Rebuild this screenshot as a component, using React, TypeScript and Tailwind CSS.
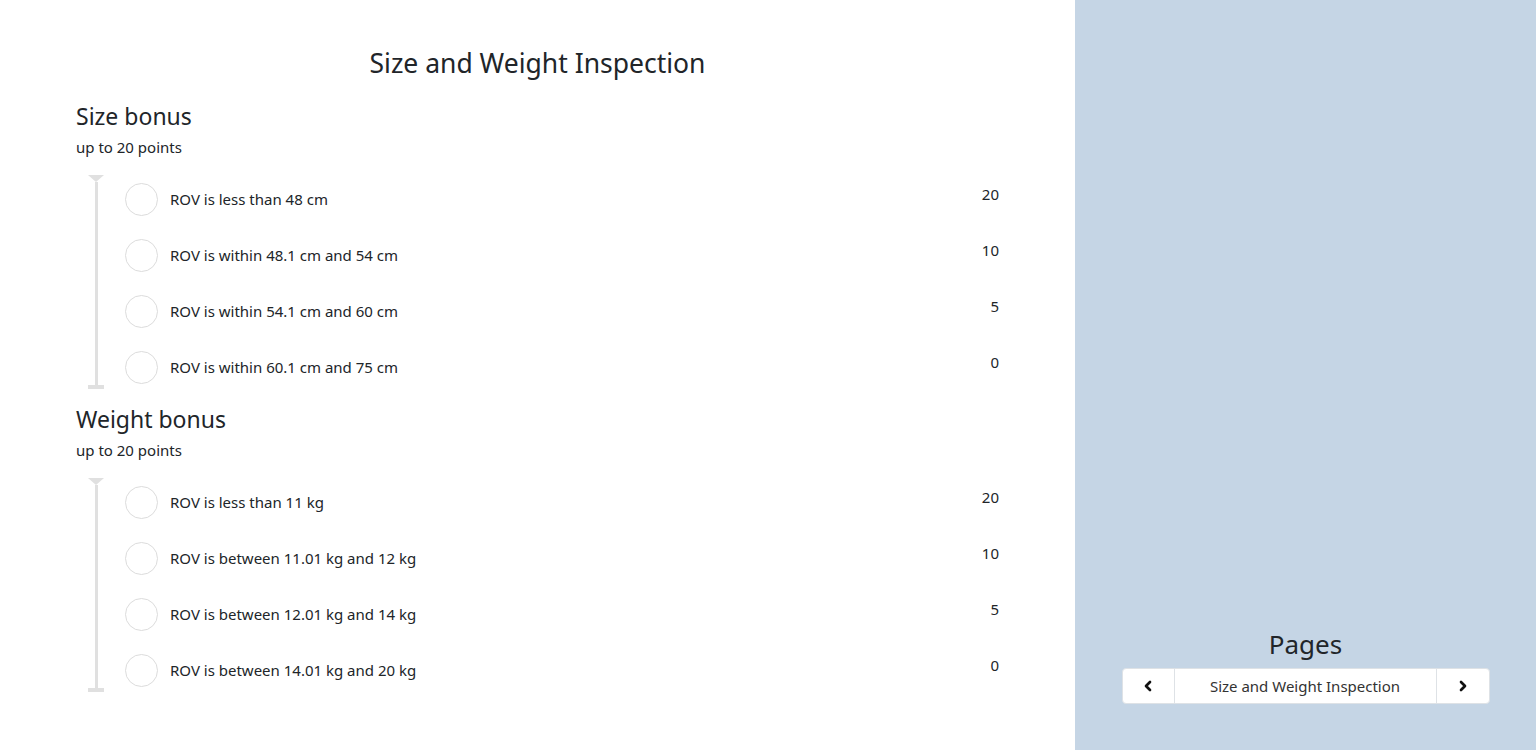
import { ChevronLeft, ChevronRight } from "lucide-react";

type Option = {
  label: string;
  points: number;
};

type Section = {
  title: string;
  subtitle: string;
  options: Option[];
};

const sections: Section[] = [
  {
    title: "Size bonus",
    subtitle: "up to 20 points",
    options: [
      { label: "ROV is less than 48 cm", points: 20 },
      { label: "ROV is within 48.1 cm and 54 cm", points: 10 },
      { label: "ROV is within 54.1 cm and 60 cm", points: 5 },
      { label: "ROV is within 60.1 cm and 75 cm", points: 0 },
    ],
  },
  {
    title: "Weight bonus",
    subtitle: "up to 20 points",
    options: [
      { label: "ROV is less than 11 kg", points: 20 },
      { label: "ROV is between 11.01 kg and 12 kg", points: 10 },
      { label: "ROV is between 12.01 kg and 14 kg", points: 5 },
      { label: "ROV is between 14.01 kg and 20 kg", points: 0 },
    ],
  },
];

const BonusSection = ({ title, subtitle, options }: Section) => {
  return (
    <div className="flex flex-col">
      <h2 className="text-[23px] leading-[29px]">{title}</h2>
      <p className="text-[15px] leading-[20px] mt-[6px]">{subtitle}</p>
      <div className="flex flex-row mt-[18px]">
        {/* timeline rail */}
        <div className="flex flex-col items-center w-[16px] ml-[12px]">
          <div className="w-0 h-0 border-l-[8px] border-r-[8px] border-t-[7px] border-l-transparent border-r-transparent border-t-[#e0e0e0]" />
          <div className="w-[3px] flex-1 bg-[#e0e0e0]" />
          <div className="w-[16px] h-[4px] bg-[#e0e0e0]" />
        </div>
        <div className="flex flex-col flex-1 gap-2 ml-[21px] mb-[-2px]">
          {options.map((opt) => (
            <div key={opt.label} className="flex flex-row items-center h-[48px]">
              <span className="w-[33px] h-[33px] rounded-full border border-[#dcdcdc] bg-white shrink-0" />
              <span className="ml-[12px] text-[15px]">{opt.label}</span>
              <span className="ml-auto self-start pt-[9px] text-[15px] leading-[20px]">{opt.points}</span>
            </div>
          ))}
        </div>
      </div>
    </div>
  );
};

export default function App() {
  return (
    <div
      className="flex flex-row w-full h-[750px] text-[#212529]"
      style={{ fontFamily: '"Noto Sans", "Open Sans", sans-serif' }}
    >
      <div className="w-[1075px] bg-white px-[76px] pt-[44px]">
        <h1 className="text-center text-[26.5px] leading-[38px]">Size and Weight Inspection</h1>
        <div className="flex flex-col gap-[16px] mt-[20px]">
          {sections.map((s) => (
            <BonusSection key={s.title} {...s} />
          ))}
        </div>
      </div>

      <div className="flex-1 bg-[#c5d5e5] flex flex-col justify-end items-center pb-[46px]">
        <h2 className="text-[26px] leading-[34px] mb-[7px]">Pages</h2>
        <div className="flex flex-row h-[36px] w-[368px] bg-white rounded border border-[#dee2e6] text-[15px]">
          <button className="w-[52px] flex items-center justify-center border-r border-[#dee2e6]">
            <ChevronLeft size={16} strokeWidth={4} className="text-[#111]" />
          </button>
          <div className="flex-1 flex items-center justify-center text-[#333]">Size and Weight Inspection</div>
          <button className="w-[53px] flex items-center justify-center border-l border-[#dee2e6]">
            <ChevronRight size={16} strokeWidth={4} className="text-[#111]" />
          </button>
        </div>
      </div>
    </div>
  );
}
